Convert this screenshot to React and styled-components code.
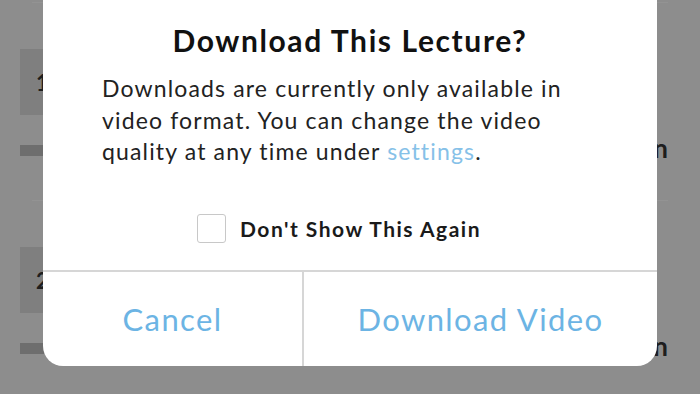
import React, { useState } from "react";
import styled, { createGlobalStyle } from "styled-components";

const GlobalStyle = createGlobalStyle`
  html, body {
    margin: 0;
    padding: 0;
    width: 700px;
    height: 394px;
    overflow: hidden;
    font-family: "Lato", "Liberation Sans", sans-serif;
  }
`;

const Screen = styled.div`
  position: relative;
  width: 700px;
  height: 394px;
  overflow: hidden;
  background: #ececec;
`;

const LectureList = styled.div`
  display: flex;
  flex-direction: column;
  padding: 2px 32px 0 20px;
`;

const LectureRow = styled.div`
  display: flex;
  flex-direction: column;
  height: 198px;
`;

const Divider = styled.div`
  height: 1px;
  margin-left: 12px;
  background: #f6f6f6;
`;

const Thumb = styled.div`
  display: flex;
  align-items: center;
  width: 140px;
  height: 66px;
  margin-top: 46px;
  padding-left: 16px;
  box-sizing: border-box;
  background: #d4d4d4;
  color: #333;
  font-size: 22px;
  font-weight: 700;
`;

const MetaRow = styled.div`
  display: flex;
  align-items: flex-start;
  justify-content: space-between;
  margin-top: 30px;
`;

const ProgressBar = styled.div`
  width: 220px;
  height: 11px;
  background: #b8b8b8;
`;

const Duration = styled.span`
  font-size: 26px;
  font-weight: 700;
  color: #333;
  line-height: 1;
  margin-top: -10px;
`;

const Backdrop = styled.div`
  position: absolute;
  inset: 0;
  background: rgba(0, 0, 0, 0.4);
`;

const Dialog = styled.div`
  position: absolute;
  left: 43px;
  width: 614px;
  top: -20px;
  bottom: 28px;
  display: flex;
  flex-direction: column;
  background: #fff;
  border-radius: 20px;
  overflow: hidden;
`;

const Body = styled.div`
  flex: 1;
  display: flex;
  flex-direction: column;
  padding-top: 42px;
`;

const Title = styled.h2`
  margin: 0;
  text-align: center;
  font-size: 30px;
  font-weight: 700;
  letter-spacing: 1.6px;
  color: #111;
  line-height: 36px;
`;

const Message = styled.p`
  margin: 15px 0 0 59px;
  font-size: 23px;
  letter-spacing: 1.15px;
  line-height: 31.5px;
  color: #222;
`;

const SettingsLink = styled.a`
  color: #86c1e8;
  text-decoration: none;
`;

const CheckRow = styled.label`
  display: flex;
  align-items: center;
  gap: 14px;
  margin-top: 46px;
  padding-left: 154px;
  cursor: pointer;
  font-size: 21px;
  font-weight: 700;
  letter-spacing: 1.5px;
  color: #1a1a1a;
`;

const Box = styled.span`
  width: 27px;
  height: 27px;
  border: 1.5px solid #c8c8c8;
  border-radius: 3px;
  background: ${(p) => (p.checked ? "#6cb4e4" : "#fff")};
`;

const Actions = styled.div`
  display: grid;
  grid-template-columns: 259px 1fr;
  height: 96px;
  box-sizing: border-box;
  border-top: 2px solid #d6d6d6;
`;

const ActionButton = styled.button`
  border: none;
  background: none;
  border-left: ${(p) => (p.divided ? "2px solid #d6d6d6" : "none")};
  font-family: inherit;
  font-size: 31px;
  letter-spacing: 1.4px;
  color: #6cb4e4;
  padding: 0;
  cursor: pointer;
`;

const lectures = [
  { num: 1, time: "5 min" },
  { num: 2, time: "8 min" },
];

export default function App() {
  const [dontShow, setDontShow] = useState(false);

  return (
    <Screen>
      <GlobalStyle />
      <LectureList>
        {lectures.map((l) => (
          <LectureRow key={l.num}>
            <Divider />
            <Thumb>{l.num}</Thumb>
            <MetaRow>
              <ProgressBar />
              <Duration>{l.time}</Duration>
            </MetaRow>
          </LectureRow>
        ))}
      </LectureList>
      <Backdrop />
      <Dialog>
        <Body>
          <Title>Download This Lecture?</Title>
          <Message>
            Downloads are currently only available in
            <br />
            video format. You can change the video
            <br />
            quality at any time under <SettingsLink>settings</SettingsLink>.
          </Message>
          <CheckRow onClick={() => setDontShow(!dontShow)}>
            <Box checked={dontShow} />
            Don't Show This Again
          </CheckRow>
        </Body>
        <Actions>
          <ActionButton>Cancel</ActionButton>
          <ActionButton divided>Download Video</ActionButton>
        </Actions>
      </Dialog>
    </Screen>
  );
}
